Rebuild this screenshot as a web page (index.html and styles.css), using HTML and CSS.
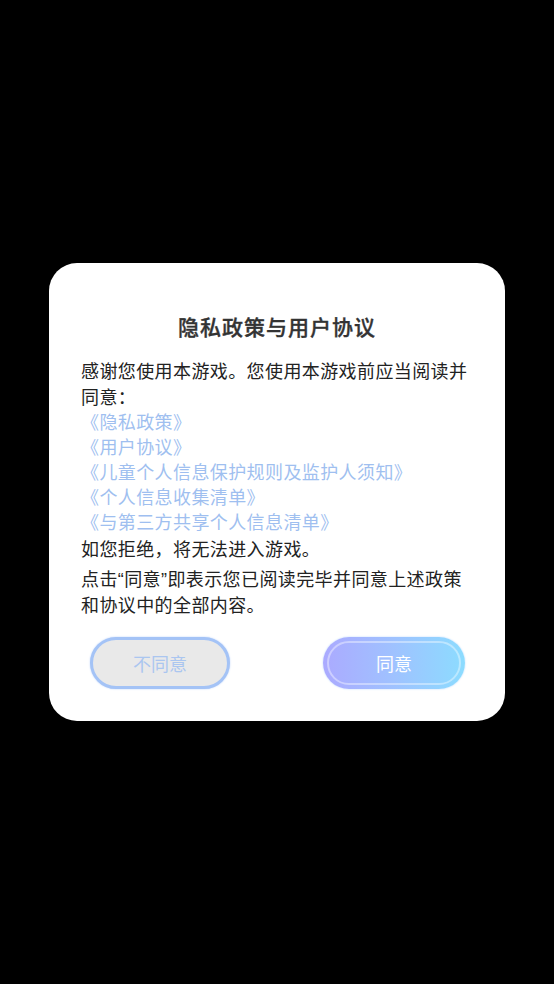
FILE: index.html
```html
<!DOCTYPE html>
<html lang="zh-CN">
<head>
<meta charset="utf-8">
<title>隐私政策与用户协议</title>
<link rel="stylesheet" href="styles.css">
</head>
<body>
<div class="screen">
  <div class="dialog">
    <h1 class="title">隐私政策与用户协议</h1>
    <p class="intro">感谢您使用本游戏。您使用本游戏前应当阅读并同意：</p>
    <ul class="links">
      <li>《隐私政策》</li>
      <li>《用户协议》</li>
      <li>《儿童个人信息保护规则及监护人须知》</li>
      <li>《个人信息收集清单》</li>
      <li>《与第三方共享个人信息清单》</li>
    </ul>
    <p class="refuse">如您拒绝，将无法进入游戏。</p>
    <p class="consent">点击“同意”即表示您已阅读完毕并同意上述政策和协议中的全部内容。</p>
    <div class="actions">
      <button class="btn btn-decline">不同意</button>
      <button class="btn btn-accept">同意</button>
    </div>
  </div>
</div>
</body>
</html>
```

FILE: styles.css
```css
html, body {
  margin: 0;
  padding: 0;
  background: #000;
}
.screen {
  width: 554px;
  height: 984px;
  padding-top: 263px;
  box-sizing: border-box;
  font-family: "Noto Sans CJK SC", "Noto Sans", sans-serif;
}
.dialog {
  width: 456px;
  margin-left: 49px;
  box-sizing: border-box;
  background: #fff;
  border-radius: 28px;
  padding: 48px 32px 32px 32px;
}
.title {
  margin: 0;
  font-size: 21px;
  line-height: 30px;
  font-weight: 500;
  color: #333;
  text-align: center;
  letter-spacing: 1px;
  -webkit-text-stroke: 0.35px #333;
}
.intro, .refuse, .consent {
  margin: 0;
  font-size: 18px;
  letter-spacing: 0.4px;
  color: #222;
  line-height: 26px;
}
.intro {
  margin-top: 16px;
}
.consent {
  margin-top: 6px;
  font-family: "Liberation Sans", "Noto Sans CJK SC", sans-serif;
}
.links {
  list-style: none;
  margin: 0;
  padding: 0;
  font-size: 18px;
  line-height: 25px;
  letter-spacing: 0.4px;
  color: #9fbff0;
}
.refuse {
  margin-top: 1px;
}
.actions {
  display: flex;
  justify-content: space-between;
  margin: 18px 8px 0 9px;
}
.btn {
  position: relative;
  width: 140px;
  height: 52px;
  border-radius: 26px;
  font-family: "Noto Sans CJK SC", "Noto Sans", sans-serif;
  font-size: 18px;
  padding: 0;
  box-sizing: border-box;
}
.btn-decline {
  background: #e9e9e9;
  border: 3px solid #a4c3f6;
  box-shadow: 0 0 2px #b8d0fa;
  color: #abc6f0;
}
.btn-accept {
  width: 142px;
  background: linear-gradient(90deg, #abaaff 0%, #9fc2ff 50%, #8cdcff 100%);
  border: none;
  box-shadow: 0 0 2px #b6d6ff;
  color: #fff;
}
.btn-accept::after {
  content: "";
  position: absolute;
  top: 4px;
  left: 4px;
  right: 4px;
  bottom: 4px;
  border: 2px solid rgba(255, 255, 255, 0.4);
  border-radius: 22px;
}
```
